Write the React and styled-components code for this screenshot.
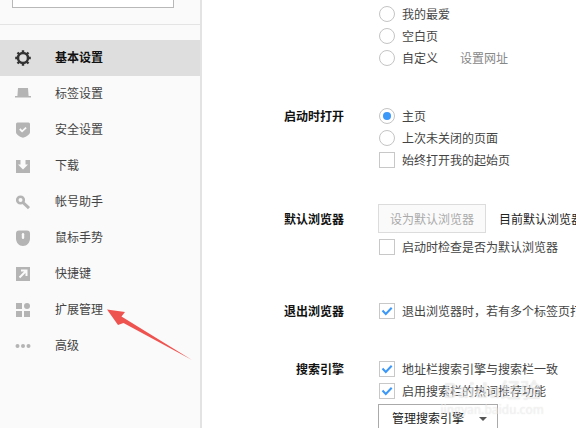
import React from 'react';
import styled, { createGlobalStyle } from 'styled-components';

const Global = createGlobalStyle`
  html, body { margin: 0; padding: 0; background: #fff; overflow: hidden; }
  body { font-family: "Noto Sans CJK SC", "Liberation Sans", sans-serif; font-size: 12px; color: #444; }
  #root { width: 576px; height: 428px; overflow: hidden; }
`;

const Page = styled.div`
  position: relative;
  display: flex;
  width: 576px;
  height: 428px;
  overflow: hidden;
`;

const Sidebar = styled.aside`
  flex: none;
  width: 200px;
  height: 100%;
  background: #fafafa;
  border-right: 2px solid #e3e3e3;
`;

const SearchArea = styled.div`
  height: 24px;
  padding: 0 26px 0 12px;
  border-bottom: 1px solid #e4e4e4;
`;

const SearchBox = styled.div`
  height: 7px;
  background: #fff;
  border: 1px solid #b8b8b8;
  border-top: none;
`;

const Nav = styled.nav`
  display: flex;
  flex-direction: column;
  margin-top: 15px;
`;

const NavItem = styled.div`
  display: flex;
  align-items: center;
  height: 36px;
  padding-left: 15px;
  gap: 24px;
  background: ${p => (p.$active ? '#dedede' : 'transparent')};
  color: ${p => (p.$active ? '#111' : '#444')};
  font-weight: ${p => (p.$active ? 700 : 400)};
  svg { flex: none; width: 16px; height: 16px; display: block; }
`;

const NavText = styled.span`
  padding-bottom: 4px;
`;

const Main = styled.main`
  flex: 1;
  min-width: 0;
  padding-top: 3px;
  overflow: hidden;
`;

const Section = styled.section`
  display: flex;
  margin-top: ${p => p.$top || 0}px;
`;

const Label = styled.div`
  flex: none;
  width: 142px;
  margin-right: 35px;
  text-align: right;
  font-weight: 700;
  color: #111;
  line-height: ${p => p.$height || 22}px;
`;

const Options = styled.div`
  display: flex;
  flex-direction: column;
  min-width: 0;
`;

const Row = styled.div`
  display: flex;
  align-items: center;
  height: 22px;
  gap: 7px;
  white-space: nowrap;
`;

const RowText = styled.span`
  padding-bottom: 2px;
`;

const Radio = styled.span`
  flex: none;
  width: 16px;
  height: 16px;
  box-sizing: border-box;
  border-radius: 50%;
  border: 1px solid #c4c4c4;
  display: flex;
  align-items: center;
  justify-content: center;
  &::after {
    content: '';
    display: ${p => (p.$on ? 'block' : 'none')};
    width: 8px;
    height: 8px;
    border-radius: 50%;
    background: #3b97f8;
  }
`;

const Check = styled.span`
  flex: none;
  width: 16px;
  height: 16px;
  box-sizing: border-box;
  border: 1px solid #c8c8c8;
  display: flex;
  align-items: center;
  justify-content: center;
  svg { width: 12px; height: 12px; display: block; }
`;

const LinkText = styled(RowText)`
  margin-left: 15px;
  color: #888;
`;

const ButtonRow = styled.div`
  display: flex;
  align-items: center;
  height: 29px;
  margin-bottom: 3px;
  margin-left: -1px;
  white-space: nowrap;
`;

const GhostButton = styled.div`
  flex: none;
  width: 108px;
  height: 29px;
  box-sizing: border-box;
  border: 1px solid #dcdcdc;
  background: #fafafa;
  color: #aaa;
  display: flex;
  align-items: center;
  justify-content: center;
`;

const CurrentText = styled.span`
  margin-left: 13px;
  color: #222;
`;

const Dropdown = styled.div`
  flex: none;
  width: 120px;
  height: 34px;
  margin-top: 2px;
  margin-left: -1px;
  box-sizing: border-box;
  border: 1px solid #aaa;
  border-bottom: none;
  padding: 4px 0 0 13px;
  display: flex;
  align-items: flex-start;
  gap: 15px;
  color: #222;
  line-height: 18px;
  &::after {
    content: '';
    margin-top: 8px;
    width: 0;
    height: 0;
    border-left: 4px solid transparent;
    border-right: 4px solid transparent;
    border-top: 4px solid #555;
  }
`;

const Arrow = styled.svg`
  position: absolute;
  left: 100px;
  top: 300px;
  width: 100px;
  height: 70px;
  pointer-events: none;
`;

const Watermark = styled.div`
  position: absolute;
  left: 436px;
  top: 378px;
  width: 112px;
  text-align: center;
  color: rgba(255, 255, 255, 0.5);
  text-shadow: 0 0 1px rgba(150, 150, 150, 0.3);
  pointer-events: none;
`;

const WatermarkTitle = styled.div`
  font-size: 20px;
  font-weight: 700;
  line-height: 24px;
  white-space: nowrap;
`;

const WatermarkUrl = styled.div`
  font-size: 12px;
  line-height: 14px;
  white-space: nowrap;
`;

const c = '#b4b4b4';
const Gear = ({ color = c }) => (
  <svg viewBox="0 0 16 16">
    <path d="M8 0.200V3M8 13V15.800M0.200 8H3M13 8H15.800M2.500 2.500L4.500 4.500M11.500 11.500L13.500 13.500M13.500 2.500L11.500 4.500M4.500 11.500L2.500 13.500" stroke={color} strokeWidth="2.400" />
    <circle cx="8" cy="8" r="5" fill="none" stroke={color} strokeWidth="2.500" />
  </svg>
);
const Tab = () => (
  <svg viewBox="0 0 16 16">
    <path d="M3 2h10l.6 8H16v1.500H0V10h2.400z" fill={c} />
  </svg>
);
const Shield = () => (
  <svg viewBox="0 0 16 16">
    <path d="M2.500 0.500h11a1.500 1.500 0 0 1 1.500 1.500v8c0 2.500-3 4.500-7 5.800C4 14.500 1 12.500 1 10V2a1.500 1.500 0 0 1 1.500-1.500z" fill={c} />
    <path d="M4.800 7l2.300 2.300 4-3.600" fill="none" stroke="#fafafa" strokeWidth="1.800" />
  </svg>
);
const Download = () => (
  <svg viewBox="0 0 16 16">
    <path d="M1 2h4.500v4.500H3L8 11.500l5-5h-2.500V2H15v13H1z" fill={c} />
  </svg>
);
const Key = () => (
  <svg viewBox="0 0 16 16">
    <circle cx="5.500" cy="6" r="3.300" fill="none" stroke={c} strokeWidth="2.600" />
    <path d="M8 8.500l6 5.700" fill="none" stroke={c} strokeWidth="3" />
  </svg>
);
const Mouse = () => (
  <svg viewBox="0 0 16 16">
    <path d="M4 .5h8a3 3 0 0 1 3 3v5c0 4-3 7.500-7 7.500s-7-3.500-7-7.500v-5a3 3 0 0 1 3-3z" fill={c} />
    <rect x="6.800" y="3" width="2.400" height="6" rx="1.200" fill="#fafafa" />
  </svg>
);
const Shortcut = () => (
  <svg viewBox="0 0 16 16">
    <path d="M1 1h14v14H1z" fill={c} />
    <path d="M6 4.500h5.500V10M11 5L4.500 11.500" fill="none" stroke="#fafafa" strokeWidth="2" />
  </svg>
);
const Extensions = () => (
  <svg viewBox="0 0 16 16">
    <path d="M1 1h6v6H1zM1 9h6v6H1zM9 9h6v6H9z" fill={c} />
    <circle cx="12" cy="4" r="3" fill={c} />
  </svg>
);
const Dots = () => (
  <svg viewBox="0 0 16 16">
    <circle cx="2.500" cy="8" r="2" fill={c} />
    <circle cx="8" cy="8" r="2" fill={c} />
    <circle cx="13.500" cy="8" r="2" fill={c} />
  </svg>
);
const Tick = () => (
  <svg viewBox="0 0 12 12">
    <path d="M1.500 5.500L4.800 9 10.700 2.800" fill="none" stroke="#3b97f8" strokeWidth="2" />
  </svg>
);

const navItems = [
  { icon: <Gear color="#333" />, text: '基本设置', active: true },
  { icon: <Tab />, text: '标签设置' },
  { icon: <Shield />, text: '安全设置' },
  { icon: <Download />, text: '下载' },
  { icon: <Key />, text: '帐号助手' },
  { icon: <Mouse />, text: '鼠标手势' },
  { icon: <Shortcut />, text: '快捷键' },
  { icon: <Extensions />, text: '扩展管理' },
  { icon: <Dots />, text: '高级' },
];

export default function App() {
  return (
    <Page>
      <Global />
      <Sidebar>
        <SearchArea><SearchBox /></SearchArea>
        <Nav>
          {navItems.map(n => (
            <NavItem key={n.text} $active={n.active}>{n.icon}<NavText>{n.text}</NavText></NavItem>
          ))}
        </Nav>
      </Sidebar>
      <Main>
        <Section>
          <Label />
          <Options>
            <Row><Radio /><RowText>我的最爱</RowText></Row>
            <Row><Radio /><RowText>空白页</RowText></Row>
            <Row><Radio /><RowText>自定义</RowText><LinkText>设置网址</LinkText></Row>
          </Options>
        </Section>
        <Section $top={36}>
          <Label>启动时打开</Label>
          <Options>
            <Row><Radio $on /><RowText>主页</RowText></Row>
            <Row><Radio /><RowText>上次未关闭的页面</RowText></Row>
            <Row><Check /><RowText>始终打开我的起始页</RowText></Row>
          </Options>
        </Section>
        <Section $top={33}>
          <Label $height={29}>默认浏览器</Label>
          <Options>
            <ButtonRow>
              <GhostButton>设为默认浏览器</GhostButton>
              <CurrentText>目前默认浏览器不是本浏览器</CurrentText>
            </ButtonRow>
            <Row><Check /><RowText>启动时检查是否为默认浏览器</RowText></Row>
          </Options>
        </Section>
        <Section $top={42}>
          <Label>退出浏览器</Label>
          <Options>
            <Row><Check><Tick /></Check><RowText>退出浏览器时，若有多个标签页打开时提醒</RowText></Row>
          </Options>
        </Section>
        <Section $top={36}>
          <Label>搜索引擎</Label>
          <Options>
            <Row><Check><Tick /></Check><RowText>地址栏搜索引擎与搜索栏一致</RowText></Row>
            <Row><Check><Tick /></Check><RowText>启用搜索栏的热词推荐功能</RowText></Row>
            <Dropdown>管理搜索引擎</Dropdown>
          </Options>
        </Section>
      </Main>
      <Arrow viewBox="100 300 100 70">
        <path d="M107 309.500L125 312 121.500 316.500 192 360 123.500 323 118 325z" fill="#ef5350" />
      </Arrow>
      <Watermark>
        <WatermarkTitle>Baidu经验</WatermarkTitle>
        <WatermarkUrl>jingyan.baidu.com</WatermarkUrl>
      </Watermark>
    </Page>
  );
}
